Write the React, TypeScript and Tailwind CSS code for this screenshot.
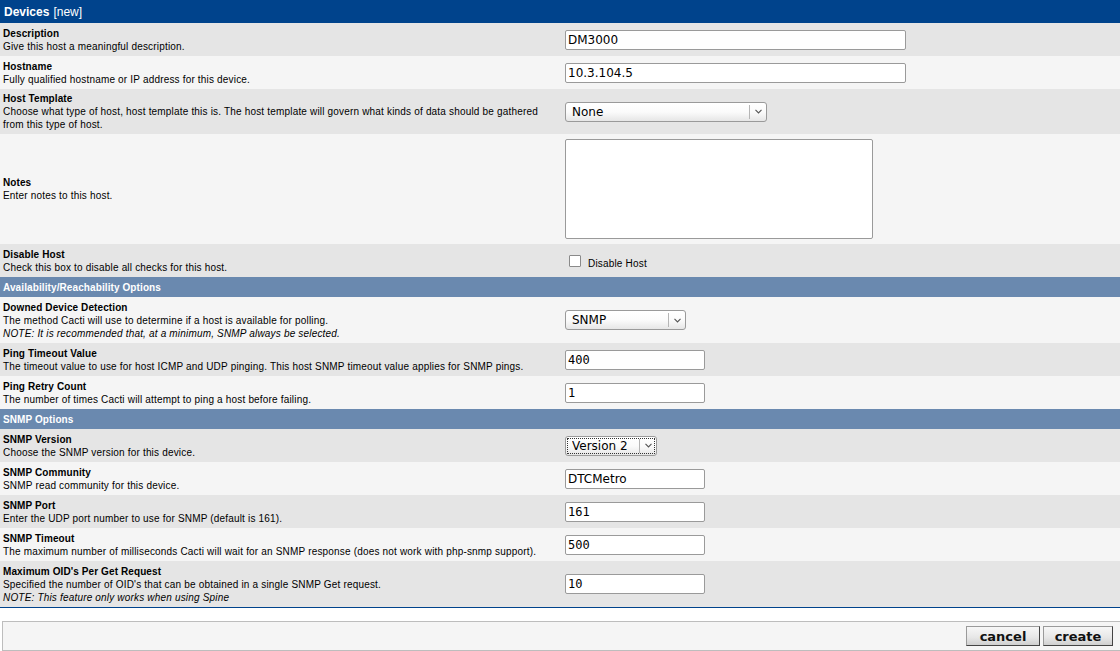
import React from "react";

type Field =
  | { kind: "text"; value: string; width: string; mono?: boolean }
  | { kind: "select"; value: string; width: string; divider: string; focused?: boolean }
  | { kind: "textarea" }
  | { kind: "checkbox"; label: string };

interface Row {
  label: string;
  lines: string[];
  note?: string;
  field: Field;
  tall?: boolean;
}

const LABEL_FONT = "font-['Liberation_Sans',Arial,sans-serif]";

const deviceRows: Row[] = [
  {
    label: "Description",
    lines: ["Give this host a meaningful description."],
    field: { kind: "text", value: "DM3000", width: "w-[341px]" },
  },
  {
    label: "Hostname",
    lines: ["Fully qualified hostname or IP address for this device."],
    field: { kind: "text", value: "10.3.104.5", width: "w-[341px]" },
  },
  {
    label: "Host Template",
    lines: [
      "Choose what type of host, host template this is. The host template will govern what kinds of data should be gathered",
      "from this type of host.",
    ],
    field: { kind: "select", value: "None", width: "w-[202px]", divider: "right-[17px]" },
  },
  {
    label: "Notes",
    lines: ["Enter notes to this host."],
    field: { kind: "textarea" },
    tall: true,
  },
  {
    label: "Disable Host",
    lines: ["Check this box to disable all checks for this host."],
    field: { kind: "checkbox", label: "Disable Host" },
  },
];

const availabilityRows: Row[] = [
  {
    label: "Downed Device Detection",
    lines: ["The method Cacti will use to determine if a host is available for polling."],
    note: "NOTE: It is recommended that, at a minimum, SNMP always be selected.",
    field: { kind: "select", value: "SNMP", width: "w-[121px]", divider: "right-[17px]" },
  },
  {
    label: "Ping Timeout Value",
    lines: ["The timeout value to use for host ICMP and UDP pinging. This host SNMP timeout value applies for SNMP pings."],
    field: { kind: "text", value: "400", width: "w-[140px]", mono: true },
  },
  {
    label: "Ping Retry Count",
    lines: ["The number of times Cacti will attempt to ping a host before failing."],
    field: { kind: "text", value: "1", width: "w-[140px]", mono: true },
  },
];

const snmpRows: Row[] = [
  {
    label: "SNMP Version",
    lines: ["Choose the SNMP version for this device."],
    field: { kind: "select", value: "Version 2", width: "w-[92px]", divider: "right-[17px]", focused: true },
  },
  {
    label: "SNMP Community",
    lines: ["SNMP read community for this device."],
    field: { kind: "text", value: "DTCMetro", width: "w-[140px]" },
  },
  {
    label: "SNMP Port",
    lines: ["Enter the UDP port number to use for SNMP (default is 161)."],
    field: { kind: "text", value: "161", width: "w-[140px]", mono: true },
  },
  {
    label: "SNMP Timeout",
    lines: ["The maximum number of milliseconds Cacti will wait for an SNMP response (does not work with php-snmp support)."],
    field: { kind: "text", value: "500", width: "w-[140px]", mono: true },
  },
  {
    label: "Maximum OID's Per Get Request",
    lines: ["Specified the number of OID's that can be obtained in a single SNMP Get request."],
    note: "NOTE: This feature only works when using Spine",
    field: { kind: "text", value: "10", width: "w-[140px]", mono: true },
  },
];

function Chevron() {
  return (
    <svg width="7" height="5" viewBox="0 0 7 5" className="text-[#555]">
      <path d="M0.5 0.8 L3.5 4 L6.5 0.8" fill="none" stroke="currentColor" strokeWidth="1.1" />
    </svg>
  );
}

function FieldControl({ field }: { field: Field }) {
  if (field.kind === "text") {
    return (
      <input
        type="text"
        defaultValue={field.value}
        className={`block ${field.width} h-[20px] px-[2px] bg-white border border-[#9a9a9a] rounded-[2px] text-[12px] text-black outline-none ${
          field.mono ? "font-['DejaVu_Sans_Mono',monospace]" : "font-['DejaVu_Sans',sans-serif]"
        }`}
      />
    );
  }
  if (field.kind === "textarea") {
    return (
      <textarea className="block w-[308px] h-[100px] bg-white border border-[#9a9a9a] rounded-[2px] resize-none outline-none" />
    );
  }
  if (field.kind === "checkbox") {
    return (
      <label className="flex items-center gap-[7px] pl-[4px]">
        <input
          type="checkbox"
          className="appearance-none w-[12px] h-[12px] bg-white border border-[#8a8a8a] rounded-[1px]"
        />
        <span className={`${LABEL_FONT} text-[10px] leading-[13px] pt-[6px] tracking-[0.18px] text-black`}>
          {field.label}
        </span>
      </label>
    );
  }
  return (
    <div className={`relative ${field.width} h-[20px]`}>
      <select
        defaultValue={field.value}
        className="appearance-none block w-full h-full py-0 pl-[6px] pr-[20px] leading-[18px] border border-[#9a9a9a] rounded-[3px] bg-[linear-gradient(#ffffff_0%,#fbfbfb_50%,#e6e6e6_100%)] font-['DejaVu_Sans',sans-serif] text-[12px] text-black outline-none"
      >
        <option>{field.value}</option>
      </select>
      {field.focused && (
        <span className="absolute left-[2px] top-[2px] bottom-[2px] right-[2px] border border-dotted border-[#333] pointer-events-none" />
      )}
      <span className={`absolute top-[3px] bottom-[3px] ${field.divider} w-px bg-[#b5b5b5] pointer-events-none`} />
      <span className="absolute right-[5px] top-0 bottom-0 flex items-center pointer-events-none">
        <Chevron />
      </span>
    </div>
  );
}

function FormRow({ row, index }: { row: Row; index: number }) {
  const bg = index % 2 === 0 ? "bg-[#e5e5e5]" : "bg-[#f5f5f5]";
  return (
    <div
      className={`grid grid-cols-[562px_1fr] items-center ${bg} ${
        row.tall ? "h-[110px]" : row.note ? "min-h-[46px]" : "min-h-[33px]"
      }`}
    >
      <div className={`px-[3px] py-[3px] ${LABEL_FONT} text-[10px] leading-[13px] text-black`}>
        <div className="font-bold tracking-[0.1px]">{row.label}</div>
        {row.lines.map((l) => (
          <div key={l} className="tracking-[0.18px]">
            {l}
          </div>
        ))}
        {row.note && <div className="italic tracking-[0.18px]">{row.note}</div>}
      </div>
      <div className="pl-[3px]">
        <FieldControl field={row.field} />
      </div>
    </div>
  );
}

function SectionHeader({ title }: { title: string }) {
  return (
    <div
      className={`h-[20px] flex items-center px-[3px] bg-[#6a89af] text-white font-bold tracking-[0.1px] ${LABEL_FONT} text-[10px]`}
    >
      {title}
    </div>
  );
}

function Button({ children, width }: { children: React.ReactNode; width: string }) {
  return (
    <button
      className={`${width} h-[20px] flex items-center justify-center border border-t-[#9a9a9a] border-l-[#9a9a9a] border-r-[#444] border-b-[#444] bg-[linear-gradient(#f7f7f7_0%,#e6e6e6_60%,#cfcfcf_100%)] font-['DejaVu_Sans',sans-serif] font-bold text-[13px] leading-none text-[#111]`}
    >
      {children}
    </button>
  );
}

export default function App() {
  return (
    <div className="w-[1120px] h-[651px] bg-white overflow-hidden">
      <div className="border-b border-[#00438c]">
        <div className={`h-[23px] flex items-center pl-[4px] bg-[#00438c] text-white text-[12px] ${LABEL_FONT}`}>
          <span className="font-bold">Devices</span>
          <span className="ml-[4px]">[new]</span>
        </div>
        {deviceRows.map((r, i) => (
          <FormRow key={r.label} row={r} index={i} />
        ))}
        <SectionHeader title="Availability/Reachability Options" />
        {availabilityRows.map((r, i) => (
          <FormRow key={r.label} row={r} index={i + 1} />
        ))}
        <SectionHeader title="SNMP Options" />
        {snmpRows.map((r, i) => (
          <FormRow key={r.label} row={r} index={i} />
        ))}
      </div>
      <div className="mt-[13px] ml-[2px] h-[30px] flex items-center justify-end gap-[3px] pr-[7px] bg-[#f5f5f5] border-t border-b border-l border-[#bdbdbd]">
        <Button width="w-[74px]">cancel</Button>
        <Button width="w-[70px]">create</Button>
      </div>
    </div>
  );
}
